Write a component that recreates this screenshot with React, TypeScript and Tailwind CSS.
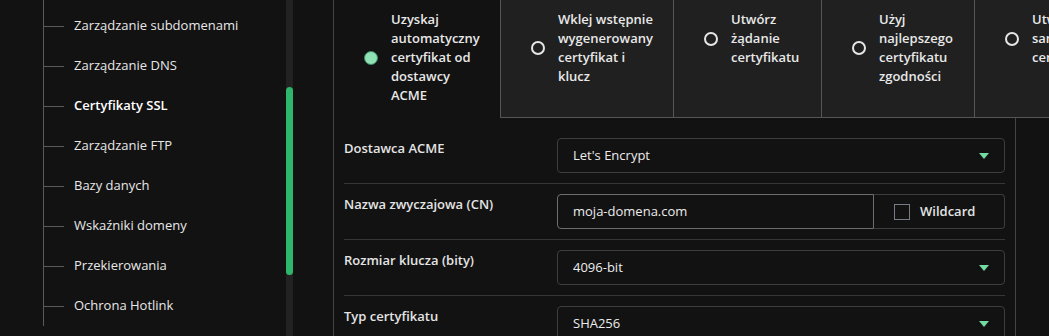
const navItems = [
  { label: "Zarządzanie subdomenami" },
  { label: "Zarządzanie DNS" },
  { label: "Certyfikaty SSL", active: true },
  { label: "Zarządzanie FTP" },
  { label: "Bazy danych" },
  { label: "Wskaźniki domeny" },
  { label: "Przekierowania" },
  { label: "Ochrona Hotlink" },
];

const tabs = [
  { lines: ["Uzyskaj", "automatyczny", "certyfikat od", "dostawcy", "ACME"], w: "w-[166px]", selected: true },
  { lines: ["Wklej wstępnie", "wygenerowany", "certyfikat i", "klucz"], w: "w-[173px]" },
  { lines: ["Utwórz", "żądanie", "certyfikatu"], w: "w-[148px]" },
  { lines: ["Użyj", "najlepszego", "certyfikatu", "zgodności"], w: "w-[153px]" },
  { lines: ["Utwórz", "samopodpisany", "certyfikat"], w: "w-[160px]" },
];

function Radio({ checked }: { checked?: boolean }) {
  return checked ? (
    <span className="w-[14px] h-[14px] shrink-0 rounded-full border border-[#3d8a63] bg-[#8fe2b4]" />
  ) : (
    <span className="w-[14px] h-[14px] shrink-0 rounded-full border-2 border-[#e6e6e6]" />
  );
}

function Caret() {
  return (
    <svg width="10" height="6" viewBox="0 0 10 6" className="shrink-0">
      <path d="M0 0h10L5 6z" fill="#74dba3" />
    </svg>
  );
}

function Select({ value }: { value: string }) {
  return (
    <div className="h-[35px] flex items-center justify-between rounded-[4px] border border-[#3d3d3d] pl-[15px] pr-[15px] text-[13px] text-[#ececec]">
      <span>{value}</span>
      <Caret />
    </div>
  );
}

function Row({ label, children, last }: { label: string; children: React.ReactNode; last?: boolean }) {
  return (
    <div className={`flex py-[10px] ${last ? "" : "border-b border-[#363636]"}`}>
      <div className="w-[213px] shrink-0 text-[13px] leading-5 font-semibold text-[#e4e4e4]">{label}</div>
      <div className="flex-1">{children}</div>
    </div>
  );
}

export default function App() {
  return (
    <div
      className="w-[1049px] h-[336px] overflow-hidden bg-[#121212] flex"
      style={{ fontFamily: '"Open Sans", "Noto Sans", sans-serif' }}
    >
      {/* Sidebar */}
      <div className="w-[286px] shrink-0">
        <ul className="ml-[43px] pt-[6px] border-l border-[#5a5a5a]">
          {navItems.map((item) => (
            <li key={item.label} className="h-[40px] flex items-center">
              <span className="w-[20px] h-px bg-[#5a5a5a]" />
              <span
                className={`ml-[10px] text-[13px] ${item.active ? "font-semibold text-white" : "text-[#e8e8e8]"}`}
              >
                {item.label}
              </span>
            </li>
          ))}
        </ul>
      </div>

      {/* Scrollbar */}
      <div className="w-[7px] shrink-0 bg-[#222222] flex flex-col">
        <div className="h-[87px] shrink-0" />
        <div className="h-[188px] shrink-0 rounded-full bg-[#2db66c]" />
      </div>
      <div className="w-[40px] shrink-0" />

      {/* Content */}
      <div className="border-l border-[#444444] flex flex-col">
        <div className="flex h-[118px] shrink-0">
          {tabs.map((tab, i) => (
            <div
              key={i}
              className={`${tab.w} shrink-0 pt-[10px] pl-[30px] ${
                tab.selected
                  ? "bg-[#121212]"
                  : "bg-[#202020] border-l border-b border-[#555555]"
              }`}
            >
              <div className="flex items-center gap-[13px]">
                <Radio checked={tab.selected} />
                <div className="text-[13px] leading-[19px] font-semibold text-[#e8e8e8] whitespace-nowrap">
                  {tab.lines.map((l) => (
                    <div key={l}>{l}</div>
                  ))}
                </div>
              </div>
            </div>
          ))}
        </div>

        <div className="w-[682px] flex-1 border-r border-[#444444] pl-[10px] pr-[10px] pt-[10px]">
          <Row label="Dostawca ACME">
            <Select value="Let's Encrypt" />
          </Row>
          <Row label="Nazwa zwyczajowa (CN)">
            <div className="h-[35px] flex">
              <div className="flex-1 flex items-center border border-[#6e6e6e] pl-[15px] text-[13px] text-[#ececec] rounded-l-[4px]">
                moja-domena.com
              </div>
              <div className="w-[131px] flex items-center border border-l-0 border-[#3d3d3d] rounded-r-[4px] pl-[20px] gap-[10px]">
                <span className="w-[16px] h-[16px] border border-[#767b84]" />
                <span className="text-[13px] font-semibold text-[#e4e4e4]">Wildcard</span>
              </div>
            </div>
          </Row>
          <Row label="Rozmiar klucza (bity)">
            <Select value="4096-bit" />
          </Row>
          <Row label="Typ certyfikatu" last>
            <Select value="SHA256" />
          </Row>
        </div>
      </div>
    </div>
  );
}
